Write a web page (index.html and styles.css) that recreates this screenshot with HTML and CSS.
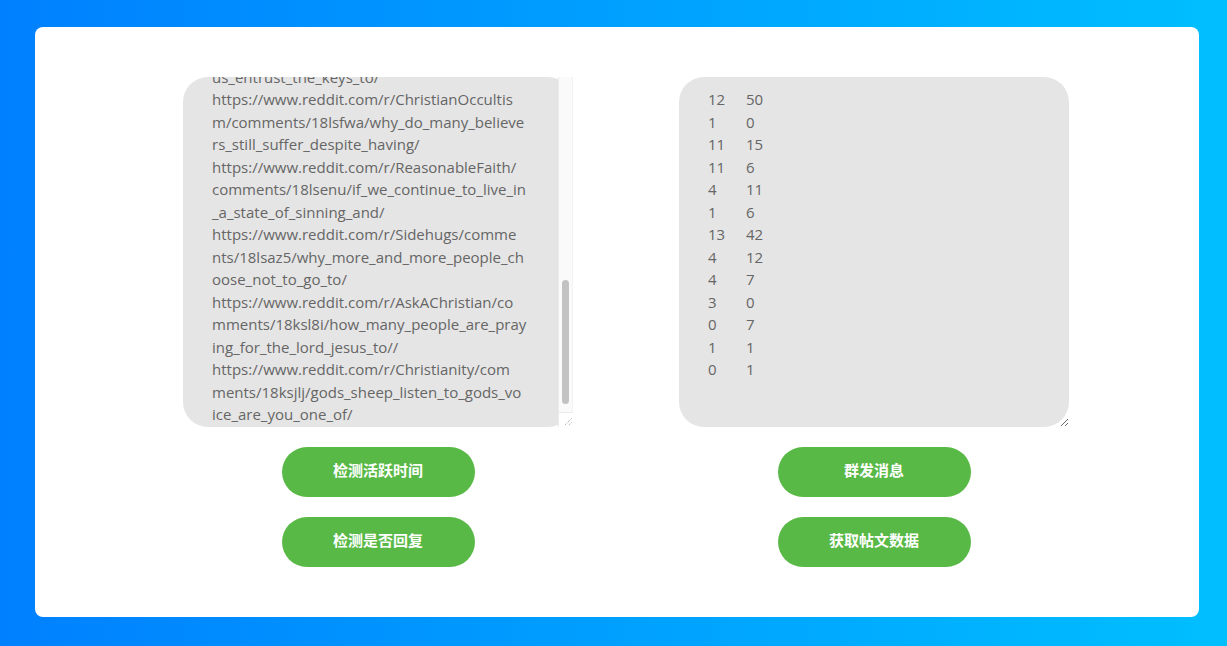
FILE: index.html
```html
<!DOCTYPE html>
<html lang="zh-CN">
<head>
<meta charset="utf-8">
<title>Reddit 工具</title>
<link rel="stylesheet" href="styles.css">
</head>
<body>
<main class="card">
  <section class="column">
    <div class="field">
      <textarea class="box links" wrap="off" readonly>https://www.reddit.com/r/TrueChristian/co
mments/18mabc1/what_does_the_bible_say_a
bout_forgiveness_of_others/
https://www.reddit.com/r/Christianity/com
ments/18m9xk2/how_do_you_keep_your_faith
_strong_during_hard/
https://www.reddit.com/r/Bible/comments/1
8m8q7z/which_translation_do_you_recomm
end_for_first_time/
https://www.reddit.com/r/OrthodoxChristia
nity/comments/18m7t3p/advice_on_startin
g_a_prayer_rule/
https://www.reddit.com/r/Catholicism/com
ments/18m6w0d/confession_for_the_first_ti
me_in_years/
https://www.reddit.com/r/Reformed/comme
nts/18m5kd9/thoughts_on_predestination_a
nd_free_will/
https://www.reddit.com/r/AskAChristian/co
mments/18m4hh2/does_god_still_speak_to
_people_today/
https://www.reddit.com/r/TrueChristian/co
mments/18lt2gq/what_does_it_mean_for_god_
us_entrust_the_keys_to/
https://www.reddit.com/r/ChristianOccultis
m/comments/18lsfwa/why_do_many_believe
rs_still_suffer_despite_having/
https://www.reddit.com/r/ReasonableFaith/
comments/18lsenu/if_we_continue_to_live_in
_a_state_of_sinning_and/
https://www.reddit.com/r/Sidehugs/comme
nts/18lsaz5/why_more_and_more_people_ch
oose_not_to_go_to/
https://www.reddit.com/r/AskAChristian/co
mments/18ksl8i/how_many_people_are_pray
ing_for_the_lord_jesus_to//
https://www.reddit.com/r/Christianity/com
ments/18ksjlj/gods_sheep_listen_to_gods_vo
ice_are_you_one_of/</textarea>
      <div class="scrollbar" aria-hidden="true">
        <div class="track"><div class="thumb"></div></div>
        <div class="corner">
          <svg width="14" height="14" viewBox="0 0 14 14">
            <line x1="12.5" y1="5.5" x2="5.5" y2="12.5" stroke="#9a9a9a" stroke-width="1" stroke-dasharray="1 1"/>
            <line x1="12.5" y1="9.5" x2="9.5" y2="12.5" stroke="#9a9a9a" stroke-width="1" stroke-dasharray="1 1"/>
          </svg>
        </div>
      </div>
    </div>
    <button class="btn" type="button">检测活跃时间</button>
    <button class="btn" type="button">检测是否回复</button>
  </section>
  <section class="column">
    <div class="field">
      <textarea class="box stats" wrap="off" readonly>12&#9;50
1&#9;0
11&#9;15
11&#9;6
4&#9;11
1&#9;6
13&#9;42
4&#9;12
4&#9;7
3&#9;0
0&#9;7
1&#9;1
0&#9;1</textarea>
    </div>
    <button class="btn" type="button">群发消息</button>
    <button class="btn" type="button">获取帖文数据</button>
  </section>
</main>
<script src="script.js"></script>
</body>
</html>
```

FILE: styles.css
```css
html, body {
  margin: 0;
  height: 100%;
}

body {
  background: linear-gradient(to right, #0080ff, #00bfff);
  padding: 27px 28px 29px 35px;
  box-sizing: border-box;
  font-family: "Open Sans", "Noto Sans CJK SC", sans-serif;
}

.card {
  background: #ffffff;
  border-radius: 8px;
  height: 590px;
  box-sizing: border-box;
  padding: 50px 130px 50px 148px;
  display: grid;
  grid-template-columns: 390px 390px;
  column-gap: 106px;
  align-content: start;
}

.column {
  display: flex;
  flex-direction: column;
  align-items: center;
  gap: 20px;
}

.field {
  position: relative;
  width: 390px;
  height: 350px;
}

.box {
  display: block;
  width: 390px;
  height: 350px;
  box-sizing: border-box;
  border: none;
  outline: none;
  border-radius: 25px;
  background: #e5e5e5;
  color: #666666;
  font-family: "Open Sans", sans-serif;
  font-size: 15px;
  line-height: 22.5px;
  padding: 11px 10px 1px 29px;
  margin: 0;
  overflow-x: hidden;
  overflow-y: auto;
  resize: both;
  tab-size: 38px;
  -moz-tab-size: 38px;
}

.links {
  resize: none;
  padding-right: 25px;
}

/* visual scrollbar drawn over the textarea's right edge */
.scrollbar {
  position: absolute;
  top: 0;
  right: 0;
  bottom: 0;
  width: 15px;
  display: flex;
  flex-direction: column;
  pointer-events: none;
}

.track {
  flex: 1;
  background: #fafafa;
  border-left: 1px solid #ececec;
  border-right: 1px solid #f2f2f2;
  display: flex;
  flex-direction: column;
  justify-content: flex-end;
  align-items: center;
  padding-bottom: 8px;
}

.thumb {
  width: 7px;
  height: 124px;
  border-radius: 4px;
  background: #c2c2c2;
}

.corner {
  height: 15px;
  background: #ffffff;
  border-left: 1px solid #ececec;
  border-top: 1px solid #ececec;
  box-sizing: border-box;
  display: flex;
  align-items: flex-end;
  justify-content: flex-end;
}

.corner svg {
  display: block;
}

.btn {
  width: 193px;
  height: 50px;
  border: none;
  border-radius: 25px;
  background: #59b946;
  color: #ffffff;
  font-family: "Noto Sans CJK SC", sans-serif;
  font-size: 15px;
  font-weight: 700;
  padding: 0 0 4px;
  line-height: 20px;
  cursor: pointer;
}
```

FILE: script.js
```js
var links = document.querySelector('.links');
links.scrollTop = links.scrollHeight;
```
